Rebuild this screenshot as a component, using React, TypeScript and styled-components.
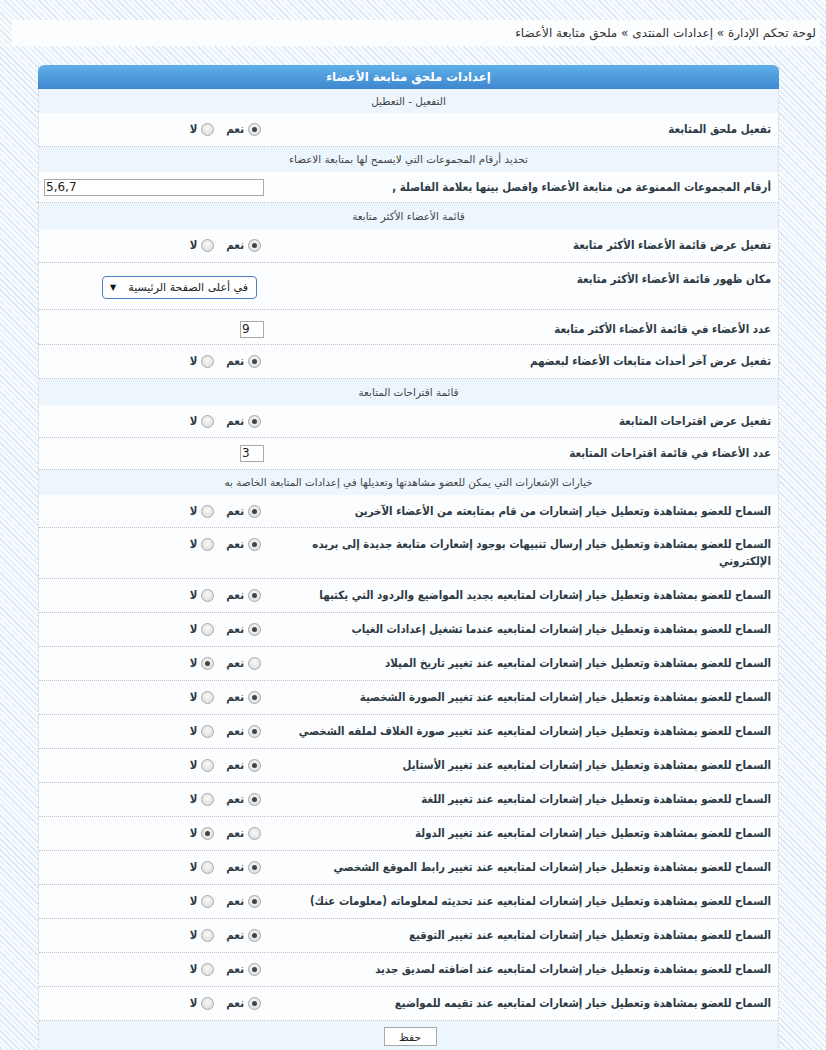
import React from "react";
import styled, { createGlobalStyle } from "styled-components";

const Global = createGlobalStyle`
  html, body { margin: 0; padding: 0; }
  body {
    direction: rtl;
    font-family: "DejaVu Sans", "Noto Sans", sans-serif;
    font-size: 12px;
    color: #333;
    background-color: #f8fbfe;
    background-image: repeating-linear-gradient(45deg, #d8e5f3 0 1px, #f8fbfe 1px 4px);
    min-height: 1050px;
  }
`;

const Page = styled.div`
  padding: 20px 6px 0 12px;
`;

const Breadcrumb = styled.div`
  height: 26px;
  line-height: 26px;
  background: #fbfdfe;
  padding: 0 4px;
  font-size: 12px;
  color: #333;
`;

const Panel = styled.div`
  margin: 19px 41px 0 26px;
  background: #fcfdfe;
  border-left: 1px dotted #c8ccd0;
  border-right: 1px dotted #c8ccd0;
`;

const Header = styled.div`
  height: 24px;
  line-height: 24px;
  text-align: center;
  color: #fff;
  font-weight: bold;
  font-size: 11.7px;
  border-radius: 6px 6px 0 0;
  background: linear-gradient(#5fb0e9, #3f86cf);
  margin: 0 -1px;
`;

const Sub = styled.div<{ $h?: number }>`
  background: #edf6fd;
  text-align: center;
  font-size: 10.4px;
  color: #444;
  height: ${(p) => p.$h ?? 25}px;
  line-height: ${(p) => p.$h ?? 25}px;
  padding: 0 8px;
`;

const Row = styled.div`
  display: grid;
  grid-template-columns: 509px 1fr;
  background: #fcfdfe;
`;

type CellProps = { $top?: number; $bottom?: number };

const Cell = styled.div<CellProps>`
  padding: ${(p) => p.$top ?? 8}px 7px ${(p) => p.$bottom ?? 8}px 8px;
  line-height: 17px;
  border-bottom: 1px dotted #c0c4c8;
`;

const Label = styled(Cell)`
  margin-left: 2px;
  font-family: "DejaVu Sans Condensed", "DejaVu Sans", sans-serif;
  font-weight: bold;
  font-size: 11.4px;
  color: #2e3a44;
`;

const Control = styled(Cell)`
  display: flex;
  align-items: flex-start;
  padding-right: 8px;
`;

const RadioGroup = styled.div`
  display: flex;
  align-items: center;
  height: 17px;
`;

const RadioItem = styled.label`
  display: flex;
  align-items: center;
  gap: 4px;
  margin-left: 12px;
  font-family: "DejaVu Sans Condensed", "DejaVu Sans", sans-serif;
  font-weight: bold;
  font-size: 11.4px;
  color: #2e3a44;
`;

const RadioDot = styled.span<{ $on: boolean }>`
  width: 13px;
  height: 13px;
  box-sizing: border-box;
  border-radius: 50%;
  border: 1px solid #a8a8a8;
  background: radial-gradient(circle at 50% 40%, #fafafa, #d6d6d6);
  display: flex;
  align-items: center;
  justify-content: center;
  &::after {
    content: "";
    width: 5px;
    height: 5px;
    border-radius: 50%;
    background: #444;
    display: ${(p) => (p.$on ? "block" : "none")};
  }
`;

const TextInput = styled.div<{ $w: number }>`
  width: ${(p) => p.$w}px;
  height: 17px;
  box-sizing: border-box;
  border: 1px solid #a9a9a9;
  background: #fff;
  direction: ltr;
  text-align: left;
  font-size: 12px;
  line-height: 15px;
  padding: 0 1px;
  color: #222;
  margin-right: -3px;
`;

const Select = styled.div`
  width: 155px;
  height: 23px;
  box-sizing: border-box;
  margin: 5px 4px 2px 0;
  border: 1px solid #4b7dbf;
  border-radius: 4px;
  background: #fff;
  display: flex;
  align-items: center;
  justify-content: space-between;
  padding: 0 8px 0 7px;
  font-size: 11px;
  color: #222;
`;

const Arrow = styled.span`
  font-size: 8px;
  color: #111;
`;

const Footer = styled.div`
  background: #edf6fd;
  padding: 6px 0 8px;
  display: flex;
  justify-content: center;
`;

const Button = styled.button`
  width: 53px;
  height: 19px;
  border: 1px solid #a9a9a9;
  background: #fff;
  font-family: "DejaVu Sans", sans-serif;
  font-size: 10.5px;
  color: #222;
  padding: 0;
  margin-left: 3px;
`;

function YesNo({ yes }: { yes: boolean }) {
  return (
    <RadioGroup>
      <RadioItem>
        <RadioDot $on={yes} />
        نعم
      </RadioItem>
      <RadioItem>
        <RadioDot $on={!yes} />
        لا
      </RadioItem>
    </RadioGroup>
  );
}

function RadioRow({
  label,
  yes = true,
  top,
  bottom,
}: {
  label: string;
  yes?: boolean;
  top?: number;
  bottom?: number;
}) {
  return (
    <Row>
      <Label $top={top} $bottom={bottom}>{label}</Label>
      <Control $top={top} $bottom={bottom}>
        <YesNo yes={yes} />
      </Control>
    </Row>
  );
}

const P = "السماح للعضو بمشاهدة وتعطيل خيار ";

const notifications: [string, boolean][] = [
  [P + "إشعارات من قام بمتابعته من الأعضاء الآخرين", true],
  [P + "إرسال تنبيهات بوجود إشعارات متابعة جديدة إلى بريده الإلكتروني", true],
  [P + "إشعارات لمتابعيه بجديد المواضيع والردود التي يكتبها", true],
  [P + "إشعارات لمتابعيه عندما تشغيل إعدادات الغياب", true],
  [P + "إشعارات لمتابعيه عند تغيير تاريخ الميلاد", false],
  [P + "إشعارات لمتابعيه عند تغيير الصورة الشخصية", true],
  [P + "إشعارات لمتابعيه عند تغيير صورة الغلاف لملفه الشخصي", true],
  [P + "إشعارات لمتابعيه عند تغيير الأستايل", true],
  [P + "إشعارات لمتابعيه عند تغيير اللغة", true],
  [P + "إشعارات لمتابعيه عند تغيير الدولة", false],
  [P + "إشعارات لمتابعيه عند تغيير رابط الموقع الشخصي", true],
  [P + "إشعارات لمتابعيه عند تحديثه لمعلوماته (معلومات عنك)", true],
  [P + "إشعارات لمتابعيه عند تغيير التوقيع", true],
  [P + "إشعارات لمتابعيه عند اضافته لصديق جديد", true],
  [P + "إشعارات لمتابعيه عند تقيمه للمواضيع", true],
];

export default function App() {
  return (
    <>
      <Global />
      <Page>
        <Breadcrumb>لوحة تحكم الإدارة » إعدادات المنتدى » ملحق متابعة الأعضاء</Breadcrumb>
        <Panel>
          <Header>إعدادات ملحق متابعة الأعضاء</Header>
          <Sub $h={24}>التفعيل - التعطيل</Sub>
          <RadioRow label="تفعيل ملحق المتابعة" />
          <Sub>تحديد أرقام المجموعات التي لايسمح لها بمتابعة الاعضاء</Sub>
          <Row>
            <Label $top={7} $bottom={6}>
              أرقام المجموعات الممنوعة من متابعة الأعضاء وافصل بينها بعلامة الفاصلة ,
            </Label>
            <Control $top={7} $bottom={6}>
              <TextInput $w={220}>5,6,7</TextInput>
            </Control>
          </Row>
          <Sub $h={26}>قائمة الأعضاء الأكثر متابعة</Sub>
          <RadioRow label="تفعيل عرض قائمة الأعضاء الأكثر متابعة" />
          <Row>
            <Label>مكان ظهور قائمة الأعضاء الأكثر متابعة</Label>
            <Control>
              <Select>
                <span>في أعلى الصفحة الرئيسية</span>
                <Arrow>▼</Arrow>
              </Select>
            </Control>
          </Row>
          <Row>
            <Label $top={11} $bottom={6}>عدد الأعضاء في قائمة الأعضاء الأكثر متابعة</Label>
            <Control $top={11} $bottom={6}>
              <TextInput $w={24}>9</TextInput>
            </Control>
          </Row>
          <RadioRow label="تفعيل عرض آخر أحداث متابعات الأعضاء لبعضهم" />
          <Sub $h={26}>قائمة اقتراحات المتابعة</Sub>
          <RadioRow label="تفعيل عرض اقتراحات المتابعة" bottom={7} />
          <Row>
            <Label $top={7} $bottom={7}>عدد الأعضاء في قائمة اقتراحات المتابعة</Label>
            <Control $top={7} $bottom={7}>
              <TextInput $w={24}>3</TextInput>
            </Control>
          </Row>
          <Sub>خيارات الإشعارات التي يمكن للعضو مشاهدتها وتعديلها في إعدادات المتابعة الخاصة به</Sub>
          {notifications.map(([t, y], i) => (
            <RadioRow key={i} label={t} yes={y} bottom={i === 0 ? 7 : 8} />
          ))}
          <Footer>
            <Button>حفظ</Button>
          </Footer>
        </Panel>
      </Page>
    </>
  );
}
